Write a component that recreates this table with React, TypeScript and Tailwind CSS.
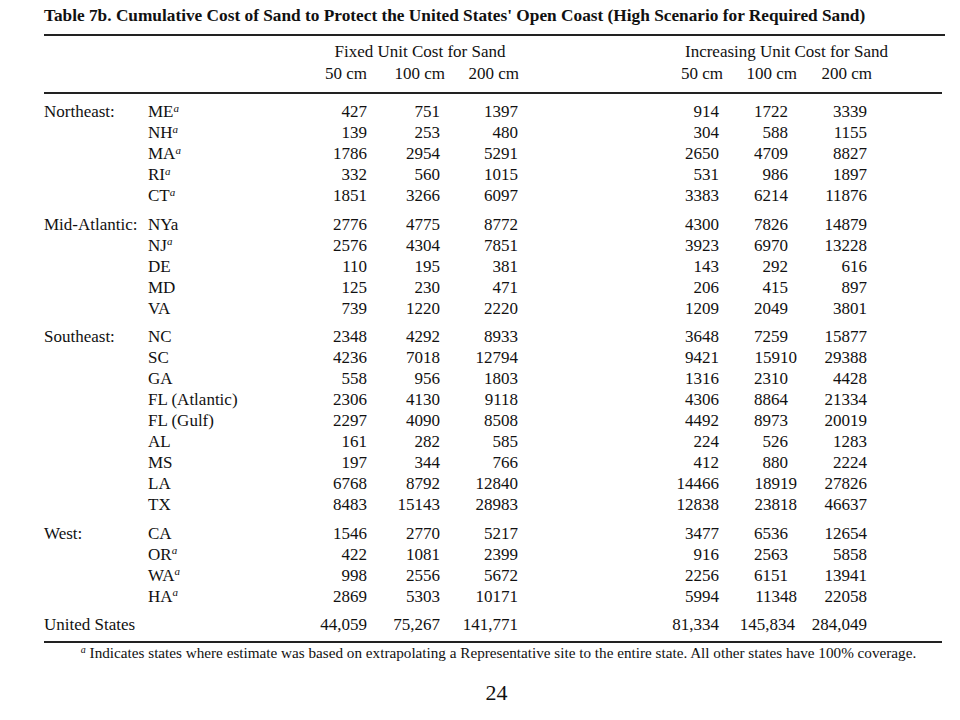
type Row = { state: string; sup?: boolean; v: string[] };
type Group = { region: string; rows: Row[] };

const groups: Group[] = [
  {
    region: "Northeast:",
    rows: [
      { state: "ME", sup: true, v: ["427", "751", "1397", "914", "1722", "3339"] },
      { state: "NH", sup: true, v: ["139", "253", "480", "304", "588", "1155"] },
      { state: "MA", sup: true, v: ["1786", "2954", "5291", "2650", "4709", "8827"] },
      { state: "RI", sup: true, v: ["332", "560", "1015", "531", "986", "1897"] },
      { state: "CT", sup: true, v: ["1851", "3266", "6097", "3383", "6214", "11876"] },
    ],
  },
  {
    region: "Mid-Atlantic:",
    rows: [
      { state: "NYa", v: ["2776", "4775", "8772", "4300", "7826", "14879"] },
      { state: "NJ", sup: true, v: ["2576", "4304", "7851", "3923", "6970", "13228"] },
      { state: "DE", v: ["110", "195", "381", "143", "292", "616"] },
      { state: "MD", v: ["125", "230", "471", "206", "415", "897"] },
      { state: "VA", v: ["739", "1220", "2220", "1209", "2049", "3801"] },
    ],
  },
  {
    region: "Southeast:",
    rows: [
      { state: "NC", v: ["2348", "4292", "8933", "3648", "7259", "15877"] },
      { state: "SC", v: ["4236", "7018", "12794", "9421", "15910", "29388"] },
      { state: "GA", v: ["558", "956", "1803", "1316", "2310", "4428"] },
      { state: "FL (Atlantic)", v: ["2306", "4130", "9118", "4306", "8864", "21334"] },
      { state: "FL (Gulf)", v: ["2297", "4090", "8508", "4492", "8973", "20019"] },
      { state: "AL", v: ["161", "282", "585", "224", "526", "1283"] },
      { state: "MS", v: ["197", "344", "766", "412", "880", "2224"] },
      { state: "LA", v: ["6768", "8792", "12840", "14466", "18919", "27826"] },
      { state: "TX", v: ["8483", "15143", "28983", "12838", "23818", "46637"] },
    ],
  },
  {
    region: "West:",
    rows: [
      { state: "CA", v: ["1546", "2770", "5217", "3477", "6536", "12654"] },
      { state: "OR", sup: true, v: ["422", "1081", "2399", "916", "2563", "5858"] },
      { state: "WA", sup: true, v: ["998", "2556", "5672", "2256", "6151", "13941"] },
      { state: "HA", sup: true, v: ["2869", "5303", "10171", "5994", "11348", "22058"] },
    ],
  },
];

const cols = "grid grid-cols-[104px_152px_67px_73px_78px_127px_74px_78px_70px]";

// 5th column: short numbers sit 9px left of the long ones
function midPad(v: string) {
  const n = v.replace(/,/g, "").length;
  if (v.includes(",")) return "pr-[2px]";
  return n >= 5 ? "" : "pr-[9px]";
}

function Values({ v }: { v: string[] }) {
  return (
    <>
      <div className="text-right">{v[0]}</div>
      <div className="text-right">{v[1]}</div>
      <div className="text-right">{v[2]}</div>
      <div />
      <div className="text-right">{v[3]}</div>
      <div className={`text-right ${midPad(v[4])}`}>{v[4]}</div>
      <div className="text-right">{v[5]}</div>
    </>
  );
}

export default function App() {
  return (
    <div
      className="w-[960px] h-[720px] bg-white text-[#111] pl-[44px]"
      style={{ fontFamily: '"Liberation Serif", "Times New Roman", serif' }}
    >
      <div className="w-[901px]">
        {/* Title */}
        <h1 className="pt-[6px] text-[17.3px] leading-[20px] font-bold whitespace-nowrap">
          Table 7b. Cumulative Cost of Sand to Protect the United States' Open Coast (High Scenario for Required Sand)
        </h1>
        <div className="mt-[8px] h-[2px] bg-[#222]" />

        {/* Column headers */}
        <div className="mt-[5px] text-[17px] leading-[22px]">
          <div className={cols}>
            <div className="col-span-2" />
            <div className="col-span-3 pl-[22px] text-center whitespace-nowrap">Fixed Unit Cost for Sand</div>
            <div />
            <div className="col-span-3 pl-[40px] text-center whitespace-nowrap">Increasing Unit Cost for Sand</div>
          </div>
          <div className={cols}>
            <div className="col-span-2" />
            <div className="text-right whitespace-nowrap">50 cm</div>
            <div className="text-right whitespace-nowrap -mr-[5px]">100 cm</div>
            <div className="text-right whitespace-nowrap -mr-[1px]">200 cm</div>
            <div />
            <div className="text-right whitespace-nowrap -mr-[4px]">50 cm</div>
            <div className="text-right whitespace-nowrap">100 cm</div>
            <div className="text-right whitespace-nowrap -mr-[5px]">200 cm</div>
          </div>
        </div>
        <div className="mt-[7px] h-[2px] w-[898px] bg-[#222]" />

        {/* Body */}
        <div className="mt-[7px] text-[17px] leading-[21px]">
          {groups.map((g, gi) => (
            <div key={g.region} className={gi > 0 ? "mt-[7.5px]" : ""}>
              {g.rows.map((r, ri) => (
                <div key={r.state} className={cols}>
                  <div className="whitespace-nowrap">{ri === 0 ? g.region : ""}</div>
                  <div className="whitespace-nowrap">
                    {r.state}
                    {r.sup && <sup className="italic text-[11px]">a</sup>}
                  </div>
                  <Values v={r.v} />
                </div>
              ))}
            </div>
          ))}
          <div className={`${cols} mt-[7.5px]`}>
            <div className="col-span-2 whitespace-nowrap">United States</div>
            <Values v={["44,059", "75,267", "141,771", "81,334", "145,834", "284,049"]} />
          </div>
        </div>
        <div className="mt-[6px] h-[2px] w-[898px] bg-[#222]" />

        {/* Footnote */}
        <p className="mt-[1px] text-[15.2px] leading-[18px] text-center whitespace-nowrap pl-[8px]">
          <sup className="italic text-[10px]">a</sup> Indicates states where estimate was based on extrapolating a Representative site to the entire state. All other states have 100% coverage.
        </p>

        {/* Page number */}
        <div className="mt-[18px] text-[22px] leading-[26px] text-center pl-[4px]">24</div>
      </div>
    </div>
  );
}
